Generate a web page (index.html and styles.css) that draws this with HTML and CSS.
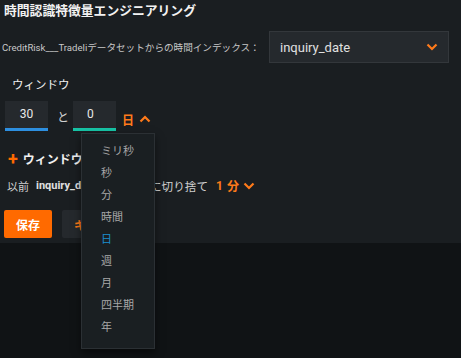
FILE: index.html
```html
<!DOCTYPE html>
<html lang="ja">
<head>
    <meta charset="UTF-8">
    <title>時間認識特徴量エンジニアリング</title>
    <link rel="stylesheet" href="styles.css">
</head>
<body>
    <div class="panel">
        <h1 class="title">時間認識特徴量エンジニアリング</h1>

        <div class="index-row">
            <span class="index-label">CreditRisk___Tradeliデータセットからの時間インデックス：</span>
            <div class="select">
                <span>inquiry_date</span>
                <svg class="chev" width="12" height="8" viewBox="0 0 12 8"><path d="M1.5 1.5 L6 6 L10.5 1.5" fill="none" stroke="#ff7a1a" stroke-width="2.2"/></svg>
            </div>
        </div>

        <div class="section-label">ウィンドウ</div>

        <div class="window-row">
            <div class="num-input blue">30</div>
            <span class="and">と</span>
            <div class="num-input teal left">0</div>
            <div class="unit-toggle">
                <span>日</span>
                <svg width="12" height="8" viewBox="0 0 12 8"><path d="M1.5 6.5 L6 2 L10.5 6.5" fill="none" stroke="#ff7a1a" stroke-width="2.2"/></svg>
            </div>
        </div>

        <div class="add-window"><span class="plus">+</span>ウィンドウを追加</div>

        <div class="round-row">
            <span>以前</span>
            <b class="field">inquiry_date</b>
            <span class="cut">に切り捨て</span>
            <span class="round-unit"><span>1</span><span>分</span>
                <svg width="12" height="8" viewBox="0 0 12 8"><path d="M1.5 1.5 L6 6 L10.5 1.5" fill="none" stroke="#ff7a1a" stroke-width="2.2"/></svg>
            </span>
        </div>

        <div class="buttons">
            <button class="btn-save">保存</button>
            <button class="btn-cancel">キャンセル</button>
        </div>
    </div>

    <ul class="unit-menu">
        <li>ミリ秒</li>
        <li>秒</li>
        <li>分</li>
        <li>時間</li>
        <li class="active">日</li>
        <li>週</li>
        <li>月</li>
        <li>四半期</li>
        <li>年</li>
    </ul>
</body>
</html>
```

FILE: styles.css
```css
body {
    margin: 0;
    background: #101315;
    font-family: Roboto, "Noto Sans CJK JP", sans-serif;
    color: #e6e6e6;
    height: 358px;
    overflow: hidden;
    position: relative;
}
.panel {
    background: #1a1e21;
    height: 243px;
    box-sizing: border-box;
    padding: 2px 0 0 0;
    overflow: hidden;
}
.title {
    margin: 0 0 0 4px;
    font-size: 12.8px;
    line-height: 18px;
    font-weight: bold;
    color: #f2f2f2;
}
.index-row {
    display: flex;
    align-items: center;
    margin-top: 11px;
}
.index-label {
    font-size: 9.6px;
    color: #c8c8c8;
    margin-left: 2px;
    width: 267px;
    white-space: nowrap;
}
.select {
    width: 180px;
    height: 32px;
    box-sizing: border-box;
    background: #25292d;
    border: 1px solid #33373b;
    display: flex;
    align-items: center;
    justify-content: space-between;
    padding: 0 10px 0 10px;
    font-size: 13px;
    color: #e0e0e0;
}
.section-label {
    margin: 14px 0 0 12px;
    font-size: 11.5px;
    line-height: 16px;
    color: #f0f0f0;
}
.window-row {
    display: flex;
    align-items: center;
    margin: 8px 0 0 5px;
}
.num-input {
    width: 43px;
    height: 30px;
    box-sizing: border-box;
    background: #25292d;
    font-size: 12px;
    color: #e8e8e8;
    display: flex;
    align-items: center;
    justify-content: center;
    padding-bottom: 2px;
}
.num-input.left {
    justify-content: flex-start;
    padding-left: 14px;
}
.num-input.blue {
    border-bottom: 3px solid #2d8fe0;
}
.num-input.teal {
    border-bottom: 3px solid #17c3a5;
}
.and {
    font-size: 12px;
    color: #cfcfcf;
    margin: 0 4px 0 9px;
}
.unit-toggle {
    display: flex;
    align-items: center;
    gap: 5px;
    margin: 6px 0 0 6px;
    color: #ff7a1a;
    font-size: 12px;
    font-weight: bold;
}
.add-window {
    margin: 19px 0 0 8px;
    font-size: 12px;
    font-weight: bold;
    color: #f0f0f0;
    display: flex;
    align-items: center;
}
.plus {
    color: #ff6a00;
    font-size: 18px;
    font-weight: bold;
    margin-right: 5px;
    line-height: 16px;
}
.round-row {
    margin: 10px 0 0 7px;
    font-size: 11px;
    color: #d0d0d0;
    display: flex;
    align-items: center;
    white-space: nowrap;
}
.round-row .field {
    margin-left: 7px;
    color: #e0e0e0;
    width: 114px;
    overflow: hidden;
}
.cut {
    font-size: 11.6px;
}
.round-unit {
    margin-left: 8px;
    color: #ff7a1a;
    font-weight: bold;
    font-size: 12px;
    display: flex;
    align-items: center;
    gap: 4px;
}
.buttons {
    display: flex;
    gap: 10px;
    margin: 16px 0 0 4px;
}
.buttons button {
    height: 28px;
    border: none;
    border-radius: 2px;
    font-family: inherit;
    font-size: 12px;
    font-weight: bold;
    padding: 0 12px;
}
.btn-save {
    background: #ff6a00;
    color: #fff;
    width: 48px;
}
.btn-cancel {
    background: #25292d;
    color: #ff7a1a;
}
.unit-menu {
    position: absolute;
    left: 81px;
    top: 133px;
    width: 74px;
    height: 216px;
    box-sizing: border-box;
    margin: 0;
    padding: 7px 0 0 19px;
    list-style: none;
    background: #1a1f22;
    border: 1px solid #2b3034;
    box-shadow: 0 4px 8px rgba(0, 0, 0, 0.5);
}
.unit-menu li {
    font-size: 11px;
    line-height: 22px;
    color: #a8a8a8;
}
.unit-menu li.active {
    color: #1a8fd0;
}
```
